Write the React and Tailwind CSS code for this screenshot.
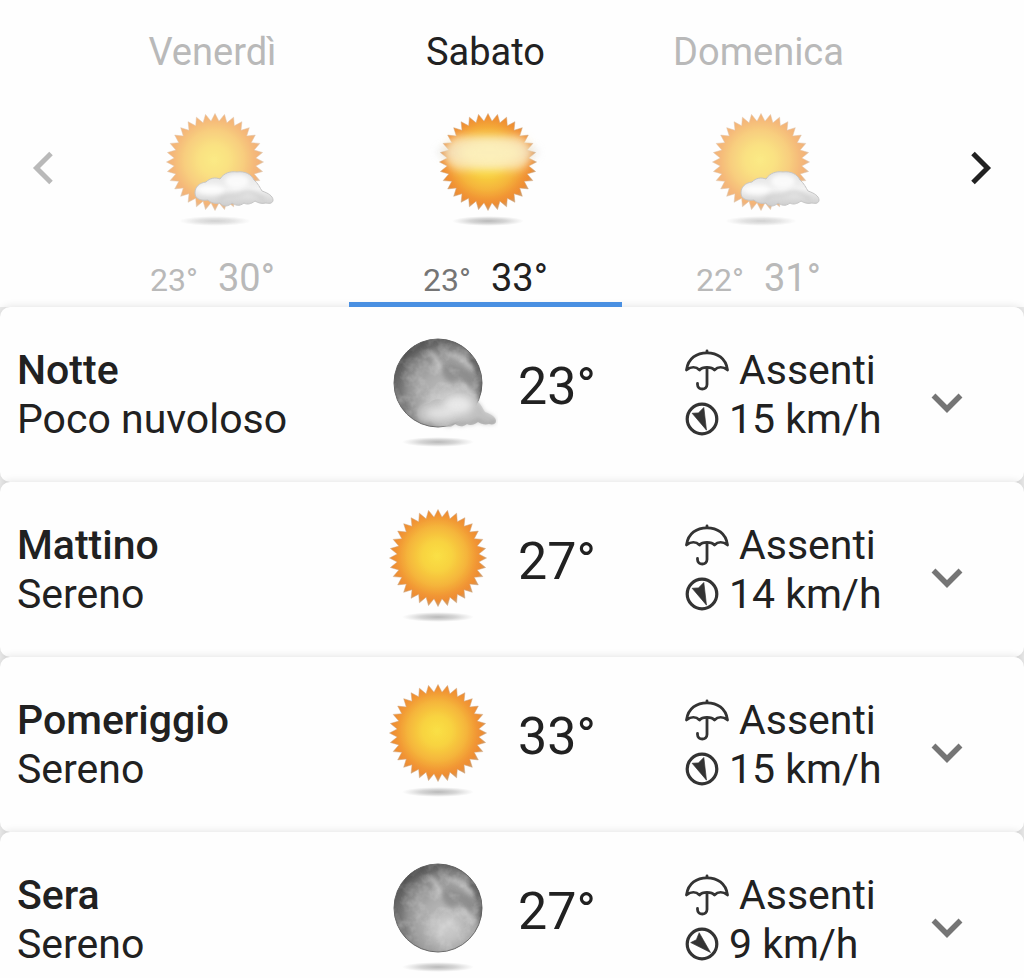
const days = [
  { name: 'Venerdì', sky: 'sunCloud', min: 23, max: 30 },
  { name: 'Sabato', sky: 'sunVeil', min: 23, max: 33, active: true },
  { name: 'Domenica', sky: 'sunCloud', min: 22, max: 31 },
]

const slots = [
  { title: 'Notte', text: 'Poco nuvoloso', sky: 'moonCloud', temp: 23, rain: 'Assenti', wind: 15, dir: -22 },
  { title: 'Mattino', text: 'Sereno', sky: 'sun', temp: 27, rain: 'Assenti', wind: 14, dir: -22 },
  { title: 'Pomeriggio', text: 'Sereno', sky: 'sun', temp: 33, rain: 'Assenti', wind: 15, dir: -22 },
  { title: 'Sera', text: 'Sereno', sky: 'moon', temp: 27, rain: 'Assenti', wind: 9, dir: -45 },
]

// 32 teeth around the disc
const sunPoints = Array.from({ length: 64 }, (_, i) => {
  const a = (i * Math.PI) / 32
  const r = i % 2 ? 41 : 48.5
  return `${(r * Math.sin(a)).toFixed(1)},${(-r * Math.cos(a)).toFixed(1)}`
}).join(' ')

const cloudPath =
  'M-20 31C-20 25-16 21-9 20C-5 16 0 15 5 17C9 11 15 9 22 10C30 9 36 12 39 18C43 21 45 26 47 29C53 31 58 34 58 38C58 41 55 42 51 41C47 42 43 41 40 39C36 42 32 43 29 41C24 45 20 43 17 41C13 45 8 45 5 41C0 42-4 41-7 38C-14 39-20 37-20 31Z'

// Shared gradients, filters and clips for every sky icon
function SkyDefs() {
  return (
    <svg className="absolute size-0" aria-hidden="true">
      <defs>
        <radialGradient id="sunFill" gradientUnits="userSpaceOnUse" cx="-1" cy="-2" r="49">
          <stop offset="0" stopColor="#fae045" />
          <stop offset="0.3" stopColor="#f8d340" />
          <stop offset="0.6" stopColor="#f5b53b" />
          <stop offset="0.82" stopColor="#f19534" />
          <stop offset="0.92" stopColor="#ee8d33" />
          <stop offset="1" stopColor="#cf9a66" />
        </radialGradient>
        <radialGradient id="moonFill" gradientUnits="userSpaceOnUse" cx="10" cy="14" r="66">
          <stop offset="0" stopColor="#c2c2c2" />
          <stop offset="0.4" stopColor="#ababab" />
          <stop offset="0.75" stopColor="#868686" />
          <stop offset="1" stopColor="#505050" />
        </radialGradient>
        <linearGradient id="cloudFill" x1="0" y1="0" x2="0" y2="1">
          <stop offset="0" stopColor="#d2d2d2" />
          <stop offset="0.5" stopColor="#eee" />
          <stop offset="1" stopColor="#b2b2b2" />
        </linearGradient>
        <radialGradient id="groundFill">
          <stop offset="0" stopColor="#8a8a8a" stopOpacity="0.6" />
          <stop offset="0.5" stopColor="#999" stopOpacity="0.4" />
          <stop offset="1" stopColor="#aaa" stopOpacity="0" />
        </radialGradient>
        <filter id="soft1" x="-20%" y="-20%" width="140%" height="140%">
          <feGaussianBlur stdDeviation="0.7" />
        </filter>
        <filter id="soft2" x="-30%" y="-50%" width="160%" height="200%">
          <feGaussianBlur stdDeviation="2" />
        </filter>
        <filter id="soft4" x="-30%" y="-80%" width="160%" height="260%">
          <feGaussianBlur stdDeviation="4" />
        </filter>
        <filter id="moonDust" x="0" y="0" width="100%" height="100%">
          <feTurbulence type="fractalNoise" baseFrequency="0.09" numOctaves="3" seed="7" />
          <feColorMatrix values="0 0 0 0 1  0 0 0 0 1  0 0 0 0 1  2 0 0 0 -0.85" />
        </filter>
        <clipPath id="moonClip">
          <circle r="44" />
        </clipPath>
        <clipPath id="cloudClip">
          <path d={cloudPath} />
        </clipPath>
      </defs>
    </svg>
  )
}

function Sun() {
  return <polygon points={sunPoints} fill="url(#sunFill)" stroke="#d0a57a" strokeWidth="0.5" filter="url(#soft1)" />
}

function Moon() {
  return (
    <g>
      <circle r="44" fill="url(#moonFill)" stroke="#666" strokeWidth="1" filter="url(#soft1)" />
      <g clipPath="url(#moonClip)">
        <path d="M8-18C16-20 24-14 30-12C38-6 40 0 36 6C30 6 26 0 20-4C16 2 10 0 6-6C4-12 4-16 8-18Z" fill="#6e6e6e" opacity="0.45" filter="url(#soft2)" />
        <path d="M-44-44H44V-38C20-42-12-40-32-18L-36 10L-26 44H-44Z" fill="#3c3c3c" opacity="0.4" filter="url(#soft4)" />
        <path d="M32-28C43-14 46 0 42 16" fill="none" stroke="#4a4a4a" strokeWidth="8" opacity="0.6" filter="url(#soft2)" />
        <g fill="none" stroke="#dcdcdc" strokeWidth="4" strokeLinecap="round" opacity="0.6" filter="url(#soft2)">
          <path d="M-8-30C-2-26 2-22 0-12" />
          <path d="M12-28C22-27 27-20 34-15" />
          <path d="M25 2C32 4 28 10 34 14" />
        </g>
        <ellipse cx="8" cy="22" rx="17" ry="14" fill="#d6d6d6" opacity="0.5" filter="url(#soft4)" />
        <rect x="-44" y="-44" width="88" height="88" opacity="0.25" filter="url(#moonDust)" />
      </g>
    </g>
  )
}

function Cloud() {
  return (
    <g>
      <path d={cloudPath} fill="url(#cloudFill)" stroke="#a6a6a6" strokeWidth="1" filter="url(#soft1)" />
      <g clipPath="url(#cloudClip)">
        <ellipse cx="22" cy="19" rx="12" ry="7" fill="#fff" opacity="0.8" filter="url(#soft2)" />
        <ellipse cx="-4" cy="28" rx="13" ry="5" fill="#fff" opacity="0.8" filter="url(#soft2)" />
        <path d="M4 38C10 31 18 36 26 32C34 27 40 32 50 37" fill="none" stroke="#a0a0a0" strokeWidth="3" opacity="0.6" filter="url(#soft2)" />
      </g>
    </g>
  )
}

// The cloud melts into the lit side of the moon, so it has no outline
function MoonCloud() {
  return (
    <g>
      <path d={cloudPath} fill="#cecece" filter="url(#soft2)" />
      <path d={cloudPath} fill="#b0b0b0" opacity="0.45" filter="url(#soft1)" />
      <g clipPath="url(#cloudClip)">
        <ellipse cx="20" cy="22" rx="15" ry="10" fill="#f0f0f0" opacity="0.85" filter="url(#soft4)" />
        <ellipse cx="2" cy="30" rx="15" ry="6" fill="#ececec" opacity="0.85" filter="url(#soft4)" />
        <path d="M12 44C20 40 34 44 40 38C46 42 54 43 59 37" fill="none" stroke="#8d8d8d" strokeWidth="3" opacity="0.7" filter="url(#soft2)" />
      </g>
    </g>
  )
}

function Veil() {
  return (
    <g>
      <ellipse cx="0" cy="-10" rx="50" ry="10" fill="#cfcfcf" opacity="0.5" filter="url(#soft4)" />
      <rect x="-43" y="-26" width="86" height="34" rx="15" fill="#fdedc8" opacity="0.75" filter="url(#soft4)" />
      <ellipse cx="2" cy="-9" rx="32" ry="12" fill="#fff4bc" opacity="0.6" filter="url(#soft4)" />
    </g>
  )
}

function SkyIcon({ sky, faded }) {
  return (
    <svg viewBox="-64 -54 124 132" className={`h-[132px] w-[124px] shrink-0 ${faded ? 'opacity-65' : ''}`} aria-hidden="true">
      <ellipse cy="59" rx="36" ry="5" fill="url(#groundFill)" />
      {sky.startsWith('sun') ? <Sun /> : <Moon />}
      {sky === 'sunVeil' && <Veil />}
      {sky === 'sunCloud' && <Cloud />}
      {sky === 'moonCloud' && <MoonCloud />}
    </svg>
  )
}

function Umbrella() {
  return (
    <svg viewBox="0 0 44 42" className="h-[42px] w-[44px]" fill="none" stroke="#333" strokeWidth="2.8" strokeLinecap="round" strokeLinejoin="round" aria-hidden="true">
      <path d="M22 2V3.5" />
      <path d="M1.5 21C3 9 12 3.8 22 3.8S41 9 42.5 21C38 17.5 33 17.5 29.5 21C26.5 17.5 17.5 17.5 14.5 21C11 17.5 6 17.5 1.5 21Z" />
      <path d="M22 19V35.5C22 41.5 12.5 41.5 12.5 35.5V34.5" />
    </svg>
  )
}

function WindDial({ dir }) {
  return (
    <svg viewBox="-17 -17 34 34" className="size-[34px]" aria-hidden="true">
      <circle r="14.8" fill="none" stroke="#333" strokeWidth="3.2" />
      <path d="M0 12L-7-9L-1-7L6-10Z" fill="#333" stroke="#333" strokeWidth="0.6" transform={`rotate(${dir})`} />
    </svg>
  )
}

function DayTab({ day }) {
  return (
    <button
      className={`flex flex-1 flex-col items-center border-b-[5px] pt-7 ${
        day.active ? 'border-[#4a90e2] text-[#212121]' : 'border-transparent text-[#b9b9b9]'
      }`}
    >
      <span className="text-[38px] leading-[48px]">{day.name}</span>
      <span className="mt-8">
        <SkyIcon sky={day.sky} faded={!day.active} />
      </span>
      <span className="mt-4 flex items-baseline gap-5 leading-[44px]">
        <span className={`text-[32px] ${day.active ? 'text-[#757575]' : ''}`}>{day.min}°</span>
        <span className="text-[38px]">{day.max}°</span>
      </span>
    </button>
  )
}

function SlotRow({ slot }) {
  return (
    <li className="grid min-h-[175px] grid-cols-[374fr_144fr_167fr_262fr_77fr] items-center rounded-[10px] bg-[#fefefe] shadow-[0_0_8px_rgba(0,0,0,0.12)]">
      <div className="pl-[17px] text-[41px] leading-[49px] whitespace-nowrap">
        <h2 className="font-medium">{slot.title}</h2>
        <p>{slot.text}</p>
      </div>
      <SkyIcon sky={slot.sky} />
      <span className="pb-4 text-[52px] leading-[64px]">{slot.temp}°</span>
      <div className="text-[41px] leading-[49px] whitespace-nowrap">
        <p className="flex items-center gap-2.5">
          <Umbrella />
          {slot.rain}
        </p>
        <p className="flex items-center gap-2.5">
          <WindDial dir={slot.dir} />
          {slot.wind} km/h
        </p>
      </div>
      <button aria-label={`Dettagli ${slot.title}`} className="-ml-4 justify-self-start pt-4">
        <svg viewBox="0 0 32 22" className="h-[22px] w-8" fill="none" stroke="#757575" strokeWidth="5.5" aria-hidden="true">
          <path d="M2.5 3.5L16 17L29.5 3.5" />
        </svg>
      </button>
    </li>
  )
}

export default function App() {
  return (
    <main className="h-screen overflow-hidden bg-white font-['Roboto',sans-serif] text-[#212121]">
      <SkyDefs />
      <nav className="flex bg-[#fefefe]">
        <button aria-label="Giorno precedente" className="flex w-[76px] items-center pt-7 pl-8">
          <svg viewBox="0 0 22 34" className="h-[34px] w-[22px]" fill="none" stroke="#b9b9b9" strokeWidth="5" aria-hidden="true">
            <path d="M19 2.5L4.5 17L19 31.5" />
          </svg>
        </button>
        {days.map(d => <DayTab key={d.name} day={d} />)}
        <button aria-label="Giorno successivo" className="flex w-[129px] items-center justify-end pt-7 pr-8">
          <svg viewBox="0 0 22 34" className="h-[34px] w-[22px]" fill="none" stroke="#212121" strokeWidth="5" aria-hidden="true">
            <path d="M3 2.5L17.5 17L3 31.5" />
          </svg>
        </button>
      </nav>
      <ul className="bg-[#ececec]">
        {slots.map(s => <SlotRow key={s.title} slot={s} />)}
      </ul>
    </main>
  )
}
